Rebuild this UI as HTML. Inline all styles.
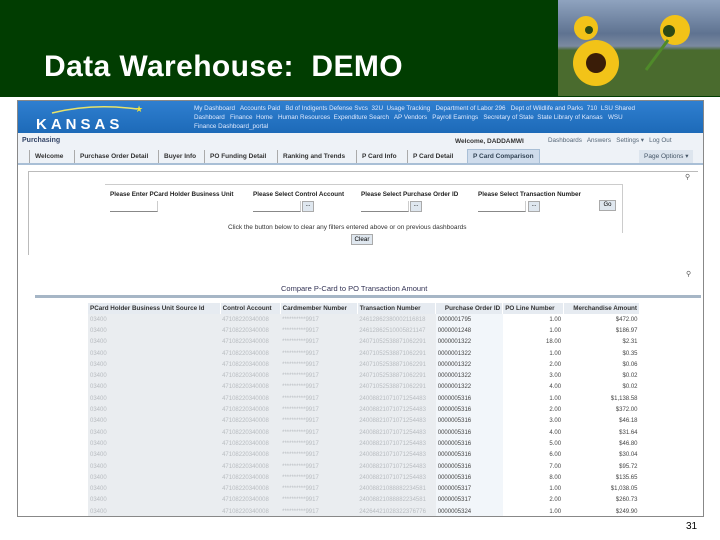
<!DOCTYPE html>
<html><head><meta charset="utf-8"><style>
*{margin:0;padding:0;box-sizing:border-box}
body{width:720px;height:540px;background:#fff;position:relative;overflow:hidden;font-family:"Liberation Sans",sans-serif}
.a{position:absolute}
.hdr{left:0;top:0;width:720px;height:97px;background:#013d01}
.title{left:44px;top:50px;color:#fff;font-size:30px;font-weight:bold;letter-spacing:0.4px}
.photo{left:558px;top:0;width:162px;height:96px;background:linear-gradient(#8fa3bf 0%,#5f7391 35%,#7b8aa0 48%,#4c6a3a 52%,#3e5a2a 100%)}
.frame{left:17px;top:100px;width:687px;height:417px;border:1px solid #888;background:#fff;overflow:hidden}
.blue{left:0;top:0;width:685px;height:32px;background:linear-gradient(#2f7fd0,#1d6ab8)}
.nav{color:#dfeaff;font-size:6.3px;line-height:9px;left:176px;top:3px;width:505px;white-space:nowrap}
.pbar{left:0;top:32px;width:685px;height:16px;background:#eef2f7;font-size:7px}
.tabs{left:0;top:47px;width:685px;height:17px;background:#eef2f7;border-bottom:2px solid #a9bfd6;font-size:6.5px;font-weight:bold;color:#333}
.tab{position:absolute;top:2px;height:13px;line-height:13px;border-left:1px solid #aaa;padding:0 5px}
.sm{font-size:6.3px;color:#222;font-weight:bold}
td{font-size:6px;height:11.3px;padding:0 2px;white-space:nowrap;color:#555}
table{border-collapse:collapse}
th{font-size:6.3px;background:#e6ebf1;color:#333;font-weight:bold;height:11px;padding:0 2px;text-align:left;border-right:1px solid #fff}
td.g{background:#eaedf0;color:#b8bcc0}
td.r{text-align:right;background:#fff;color:#444}
td.p{background:#f2f6fa;color:#444}
</style></head><body>
<div class="a hdr"></div>
<div class="a photo">
<svg width="162" height="96" viewBox="0 0 162 96">
<rect x="0" y="50" width="162" height="46" fill="#4a6b2e"/>
<g fill="#f2c318">
<circle cx="38" cy="63" r="23"/><circle cx="117" cy="30" r="15"/><circle cx="28" cy="28" r="12"/>
</g>
<circle cx="38" cy="63" r="10" fill="#3a1d08"/>
<circle cx="111" cy="31" r="6" fill="#2d4a14"/>
<circle cx="31" cy="30" r="4" fill="#2d4a14"/>
<path d="M110 40 L88 70" stroke="#4f8a2a" stroke-width="3"/>
</svg></div>
<div class="a title">Data Warehouse:&nbsp; DEMO</div>

<div class="a frame">
 <div class="a blue">
  <svg class="a" style="left:14px;top:2px" width="130" height="28"><path d="M20 10 Q60 0 105 6" stroke="#e8e36a" stroke-width="1.5" fill="none"/><text x="103" y="9" fill="#f4e43a" font-size="9">★</text><text x="4" y="26" fill="#fff" font-family="Liberation Sans" font-weight="bold" font-size="15" letter-spacing="4">KANSAS</text></svg>
  <div class="a nav">My Dashboard &nbsp; Accounts Paid &nbsp; Bd of Indigents Defense Svcs &nbsp;32U &nbsp;Usage Tracking &nbsp; Department of Labor 296 &nbsp; Dept of Wildlife and Parks &nbsp;710 &nbsp;LSU Shared<br>Dashboard &nbsp; Finance &nbsp;Home &nbsp; Human Resources &nbsp;Expenditure Search &nbsp; AP Vendors &nbsp; Payroll Earnings &nbsp; Secretary of State &nbsp;State Library of Kansas &nbsp; WSU<br>Finance Dashboard_portal</div>
 </div>
 <div class="a pbar"><span class="a" style="left:4px;top:4px;font-weight:bold;color:#334466">Purchasing</span><span class="a" style="left:437px;top:5px;font-size:6.5px;font-weight:bold;color:#333">Welcome, DADDAMWI</span><span class="a" style="left:530px;top:4px;color:#567;font-size:6.3px">Dashboards &nbsp; Answers &nbsp; Settings ▾ &nbsp; Log Out</span></div>
 <div class="a tabs">
  <span class="tab" style="left:11px">Welcome</span><span class="tab" style="left:56px">Purchase Order Detail</span><span class="tab" style="left:140px">Buyer Info</span><span class="tab" style="left:186px">PO Funding Detail</span><span class="tab" style="left:259px">Ranking and Trends</span><span class="tab" style="left:338px">P Card Info</span><span class="tab" style="left:389px">P Card Detail</span><span class="tab" style="left:449px;background:#cfdcec;top:1px;height:15px;border:1px solid #a9bfd6;color:#345">P Card Comparison</span>
  <span class="tab" style="left:621px;border:none;font-weight:normal;background:#dde5ee;color:#456">Page Options ▾</span>
 </div>
 <div class="a" style="left:10px;top:70px;width:670px;height:84px;border-left:1px solid #bbb;border-top:1px solid #bbb"></div>
 <div class="a" style="left:667px;top:72px;font-size:7px;color:#555">⚲</div>
 <div class="a" style="left:87px;top:83px;width:518px;height:49px;border-top:1px solid #ccc;border-right:1px solid #ccc"></div>
 <div class="a sm" style="left:92px;top:90px">Please Enter PCard Holder Business Unit</div>
 <div class="a sm" style="left:235px;top:90px">Please Select Control Account</div>
 <div class="a sm" style="left:343px;top:90px">Please Select Purchase Order ID</div>
 <div class="a sm" style="left:460px;top:90px">Please Select Transaction Number</div>
 <div class="a" style="left:92px;top:100px;width:48px;height:11px;border-bottom:1px solid #888;border-right:1px solid #ccc"></div>
 <div class="a" style="left:235px;top:100px;width:48px;height:11px;border-bottom:1px solid #888;border-right:1px solid #ccc"></div>
 <div class="a" style="left:343px;top:100px;width:48px;height:11px;border-bottom:1px solid #888;border-right:1px solid #ccc"></div>
 <div class="a" style="left:460px;top:100px;width:48px;height:11px;border-bottom:1px solid #888;border-right:1px solid #ccc"></div>
 <div class="a" style="left:284px;top:100px;width:12px;height:11px;background:#dfe7ef;border:1px solid #aaa;font-size:6px;text-align:center">...</div>
 <div class="a" style="left:392px;top:100px;width:12px;height:11px;background:#dfe7ef;border:1px solid #aaa;font-size:6px;text-align:center">...</div>
 <div class="a" style="left:510px;top:100px;width:12px;height:11px;background:#dfe7ef;border:1px solid #aaa;font-size:6px;text-align:center">...</div>
 <div class="a" style="left:581px;top:99px;width:17px;height:11px;background:#dfe7ef;border:1px solid #aaa;font-size:6px;text-align:center;line-height:9px">Go</div>
 <div class="a" style="left:210px;top:123px;font-size:6.5px;color:#333">Click the button below to clear any filters entered above or on previous dashboards</div>
 <div class="a" style="left:333px;top:133px;width:22px;height:11px;background:#dfe7ef;border:1px solid #aaa;font-size:6.3px;text-align:center;line-height:9px">Clear</div>
 <div class="a" style="left:668px;top:169px;font-size:7px;color:#555">⚲</div>
 <div class="a" style="left:263px;top:183px;font-size:7.5px;color:#335">Compare P-Card to PO Transaction Amount</div>
 <div class="a" style="left:17px;top:194px;width:666px;height:3px;background:#a6b6c6"></div>
 <table class="a" style="left:70px;top:202px;width:552px">
  <tr><th>PCard Holder Business Unit Source Id</th><th>Control Account</th><th>Cardmember Number</th><th>Transaction Number</th><th style="text-align:right">Purchase Order ID</th><th>PO Line Number</th><th style="text-align:right">Merchandise Amount</th></tr>
  <tr><td class="g">03400</td><td class="g">47108220340008</td><td class="g">**********9917</td><td class="g">24612862380002116818</td><td class="p">0000001795</td><td class="r">1.00</td><td class="r">$472.00</td></tr>
  <tr><td class="g">03400</td><td class="g">47108220340008</td><td class="g">**********9917</td><td class="g">24612862510005821147</td><td class="p">0000001248</td><td class="r">1.00</td><td class="r">$186.97</td></tr>
  <tr><td class="g">03400</td><td class="g">47108220340008</td><td class="g">**********9917</td><td class="g">24071052538871062291</td><td class="p">0000001322</td><td class="r">18.00</td><td class="r">$2.31</td></tr>
  <tr><td class="g">03400</td><td class="g">47108220340008</td><td class="g">**********9917</td><td class="g">24071052538871062291</td><td class="p">0000001322</td><td class="r">1.00</td><td class="r">$0.35</td></tr>
  <tr><td class="g">03400</td><td class="g">47108220340008</td><td class="g">**********9917</td><td class="g">24071052538871062291</td><td class="p">0000001322</td><td class="r">2.00</td><td class="r">$0.06</td></tr>
  <tr><td class="g">03400</td><td class="g">47108220340008</td><td class="g">**********9917</td><td class="g">24071052538871062291</td><td class="p">0000001322</td><td class="r">3.00</td><td class="r">$0.02</td></tr>
  <tr><td class="g">03400</td><td class="g">47108220340008</td><td class="g">**********9917</td><td class="g">24071052538871062291</td><td class="p">0000001322</td><td class="r">4.00</td><td class="r">$0.02</td></tr>
  <tr><td class="g">03400</td><td class="g">47108220340008</td><td class="g">**********9917</td><td class="g">24008821071071254483</td><td class="p">0000005316</td><td class="r">1.00</td><td class="r">$1,138.58</td></tr>
  <tr><td class="g">03400</td><td class="g">47108220340008</td><td class="g">**********9917</td><td class="g">24008821071071254483</td><td class="p">0000005316</td><td class="r">2.00</td><td class="r">$372.00</td></tr>
  <tr><td class="g">03400</td><td class="g">47108220340008</td><td class="g">**********9917</td><td class="g">24008821071071254483</td><td class="p">0000005316</td><td class="r">3.00</td><td class="r">$46.18</td></tr>
  <tr><td class="g">03400</td><td class="g">47108220340008</td><td class="g">**********9917</td><td class="g">24008821071071254483</td><td class="p">0000005316</td><td class="r">4.00</td><td class="r">$31.64</td></tr>
  <tr><td class="g">03400</td><td class="g">47108220340008</td><td class="g">**********9917</td><td class="g">24008821071071254483</td><td class="p">0000005316</td><td class="r">5.00</td><td class="r">$46.80</td></tr>
  <tr><td class="g">03400</td><td class="g">47108220340008</td><td class="g">**********9917</td><td class="g">24008821071071254483</td><td class="p">0000005316</td><td class="r">6.00</td><td class="r">$30.04</td></tr>
  <tr><td class="g">03400</td><td class="g">47108220340008</td><td class="g">**********9917</td><td class="g">24008821071071254483</td><td class="p">0000005316</td><td class="r">7.00</td><td class="r">$95.72</td></tr>
  <tr><td class="g">03400</td><td class="g">47108220340008</td><td class="g">**********9917</td><td class="g">24008821071071254483</td><td class="p">0000005316</td><td class="r">8.00</td><td class="r">$135.65</td></tr>
  <tr><td class="g">03400</td><td class="g">47108220340008</td><td class="g">**********9917</td><td class="g">24008821088882234581</td><td class="p">0000005317</td><td class="r">1.00</td><td class="r">$1,038.05</td></tr>
  <tr><td class="g">03400</td><td class="g">47108220340008</td><td class="g">**********9917</td><td class="g">24008821088882234581</td><td class="p">0000005317</td><td class="r">2.00</td><td class="r">$260.73</td></tr>
  <tr><td class="g">03400</td><td class="g">47108220340008</td><td class="g">**********9917</td><td class="g">24264421028322376776</td><td class="p">0000005324</td><td class="r">1.00</td><td class="r">$249.90</td></tr>
 </table>
</div>
<div class="a" style="left:686px;top:521px;font-size:10px;color:#000">31</div>
</body></html>
